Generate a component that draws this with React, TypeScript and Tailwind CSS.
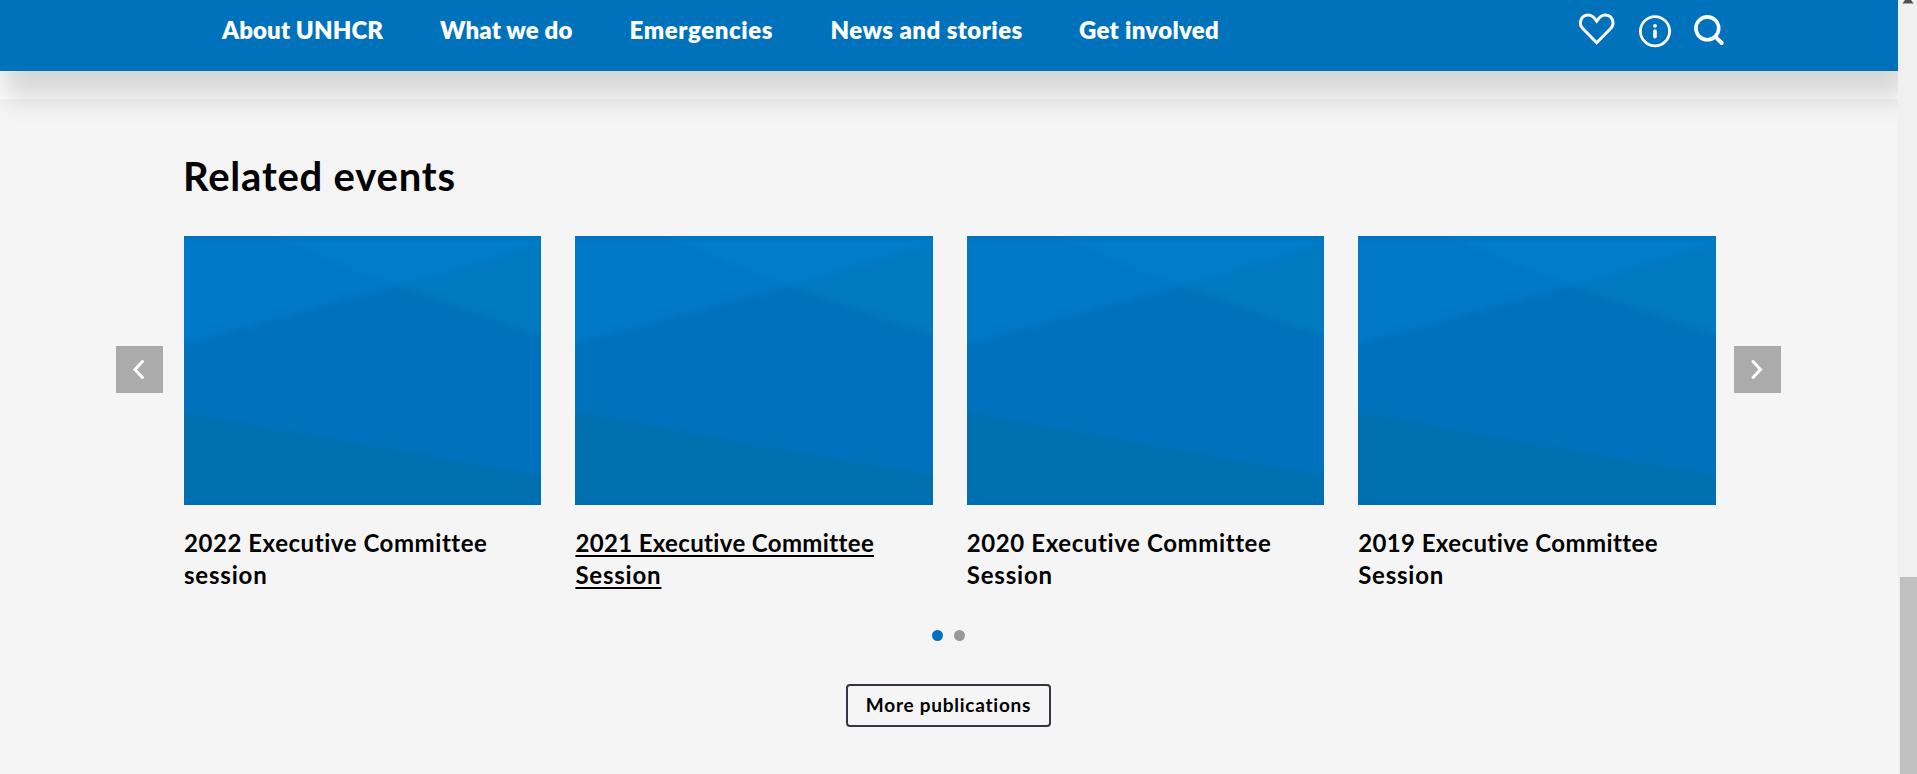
import React from "react";

type Item = { label: string; className: string };

const navItems: Item[] = [
  { label: "About UNHCR", className: "w-[218px] tracking-[0.1px]" },
  { label: "What we do", className: "w-[189.500px] tracking-[0.15px]" },
  { label: "Emergencies", className: "w-[201px] tracking-[0.6px]" },
  { label: "News and stories", className: "w-[248.500px] tracking-[0.45px]" },
  { label: "Get involved", className: "w-[150px] tracking-[0.3px]" },
];

const events = [
  { title: ["2022 Executive Committee", "session"], tracking: "tracking-[0.55px]", active: false },
  { title: ["2021 Executive Committee", "Session"], tracking: "tracking-[0.35px]", active: true },
  { title: ["2020 Executive Committee", "Session"], tracking: "tracking-[0.6px]", active: false },
  { title: ["2019 Executive Committee", "Session"], tracking: "tracking-[0.4px]", active: false },
];

function Header() {
  return (
    <header className="relative z-10 flex h-[71px] shrink-0 bg-[#0072bc] pl-[222px] text-white shadow-[7px_23px_25px_4px_rgba(0,0,0,0.155)]">
      <nav className="flex pt-[14px] text-[24px] leading-[32px] font-extrabold whitespace-nowrap">
        {navItems.map((n) => (
          <a key={n.label} className={`shrink-0 ${n.className}`}>
            {n.label}
          </a>
        ))}
      </nav>
      <div className="ml-auto flex w-[320px] gap-[23px] pt-[11px]">
        <svg className="h-[38px] w-[38px] shrink-0 overflow-visible" viewBox="0 0 38 38" fill="none" stroke="white" strokeWidth="3">
          <path d="M18.700 31.700 4.500 17.200C.500 13 2.400 4 10.300 4c4.200 0 6.200 2.700 8.400 6.100C20.900 6.700 22.900 4 27.100 4c7.900 0 9.800 9 5.800 13.200Z" />
        </svg>
        <svg className="h-[38px] w-[33px] shrink-0 overflow-visible" viewBox="0 0 33 38" fill="none">
          <circle cx="16" cy="20.200" r="14.600" stroke="white" strokeWidth="2.800" />
          <circle cx="16" cy="14.800" r="1.900" fill="white" />
          <path d="M16 20v5.800" stroke="white" strokeWidth="3.600" strokeLinecap="round" />
        </svg>
        <svg className="h-[38px] w-[34px] shrink-0 overflow-visible" viewBox="0 0 34 38" fill="none" stroke="white">
          <circle cx="12.300" cy="17.300" r="11.400" strokeWidth="3.600" />
          <path d="m20.500 25.800 6.200 6.200" strokeWidth="4" strokeLinecap="round" />
        </svg>
      </div>
    </header>
  );
}

function CardArt() {
  return (
    <svg className="block h-[268.500px] w-full bg-[#0071bc]" viewBox="0 0 357 268" preserveAspectRatio="none">
      <defs>
        <linearGradient id="edge" x1="0" y1="0" x2="0" y2="1">
          <stop offset="0" stopColor="#0068b0" stopOpacity="0.5" />
          <stop offset="0.03" stopColor="#0072bc" stopOpacity="0" />
          <stop offset="0.96" stopColor="#006cb6" stopOpacity="0" />
          <stop offset="1" stopColor="#006cb6" stopOpacity="0.8" />
        </linearGradient>
        <filter id="soft" filterUnits="userSpaceOnUse" x="-30" y="-30" width="417" height="328">
          <feGaussianBlur stdDeviation="2.500" />
        </filter>
      </defs>
      <g filter="url(#soft)">
        <path d="M-20-20H40L213 50-20 113Z" fill="#0078c8" />
        <path d="M38-20H386V-2L213 50Z" fill="#007dca" />
        <path d="M213 50 386-2V110Z" fill="#0079c1" />
        <path d="M-20 173 386 245V290H-20Z" fill="#006faf" />
      </g>
      <rect width="357" height="268" fill="url(#edge)" />
    </svg>
  );
}

function Arrow({ d, label }: { d: string; label: string }) {
  return (
    <button aria-label={label} className="mt-[110px] h-[47px] w-[47px] shrink-0 bg-[#ababab]">
      <svg viewBox="0 0 47 47" className="h-[47px] w-[47px]" fill="none" stroke="white" strokeWidth="3" strokeLinecap="round">
        <path d={d} />
      </svg>
    </button>
  );
}

export default function App() {
  return (
    <div className="flex h-[774px] w-full overflow-hidden bg-[#f5f5f5] font-[Lato,sans-serif] text-black [font-variant-ligatures:none]">
      <div className="flex min-w-0 flex-1 flex-col overflow-hidden">
        <Header />
        <div className="h-[27.500px] shrink-0 bg-white" />
        <main className="flex flex-1 flex-col">
          <h2 className="ml-[183px] mt-[53.500px] h-[48px] w-[280px] text-[40px] leading-[48px] font-bold tracking-[0.8px] whitespace-nowrap">
            Related events
          </h2>
          <section className="mt-[36px] flex h-[374px] pl-[116px]">
            <Arrow label="Previous" d="m26.500 15.500-7.500 8 7.500 8" />
            <div className="ml-[21px] mr-[18.500px] grid w-[1531.500px] shrink-0 grid-cols-4 gap-[34px]">
              {events.map((e) => (
                <article key={e.title[0]}>
                  <CardArt />
                  <h3 className="mt-[22.500px] text-[24px] leading-[32px] font-bold whitespace-nowrap">
                    {e.title.map((line, i) => (
                      <span
                        key={line}
                        className={`block w-fit ${i === 0 ? e.tracking : "tracking-[0.8px]"} ${
                          e.active
                            ? "underline decoration-2 underline-offset-[3px] [text-decoration-skip-ink:none]"
                            : ""
                        }`}
                      >
                        {line}
                      </span>
                    ))}
                  </h3>
                </article>
              ))}
            </div>
            <Arrow label="Next" d="m19 15.500 7.500 8-7.500 8" />
          </section>
          <div className="mt-[20px] flex gap-[11px] pl-[932px]">
            <span className="h-[11px] w-[11px] rounded-full bg-[#0072bc]" />
            <span className="h-[11px] w-[11px] rounded-full bg-[#999]" />
          </div>
          <button className="ml-[846px] mt-[43px] flex h-[43px] w-[205px] items-center justify-center rounded-[4px] border-2 border-[#333840] text-[19px] font-bold tracking-[0.75px] whitespace-nowrap">
            More publications
          </button>
        </main>
      </div>
      <aside className="flex w-[19px] shrink-0 flex-col items-end bg-[#f0f0f0]">
        <svg className="h-[4px] w-[17px]" viewBox="0 0 17 4">
          <path d="M5 0h6l2.500 3.500h-11Z" fill="#505050" />
        </svg>
        <div className="mt-[573px] w-[17px] flex-1 bg-[#c0c0c0]" />
      </aside>
    </div>
  );
}
